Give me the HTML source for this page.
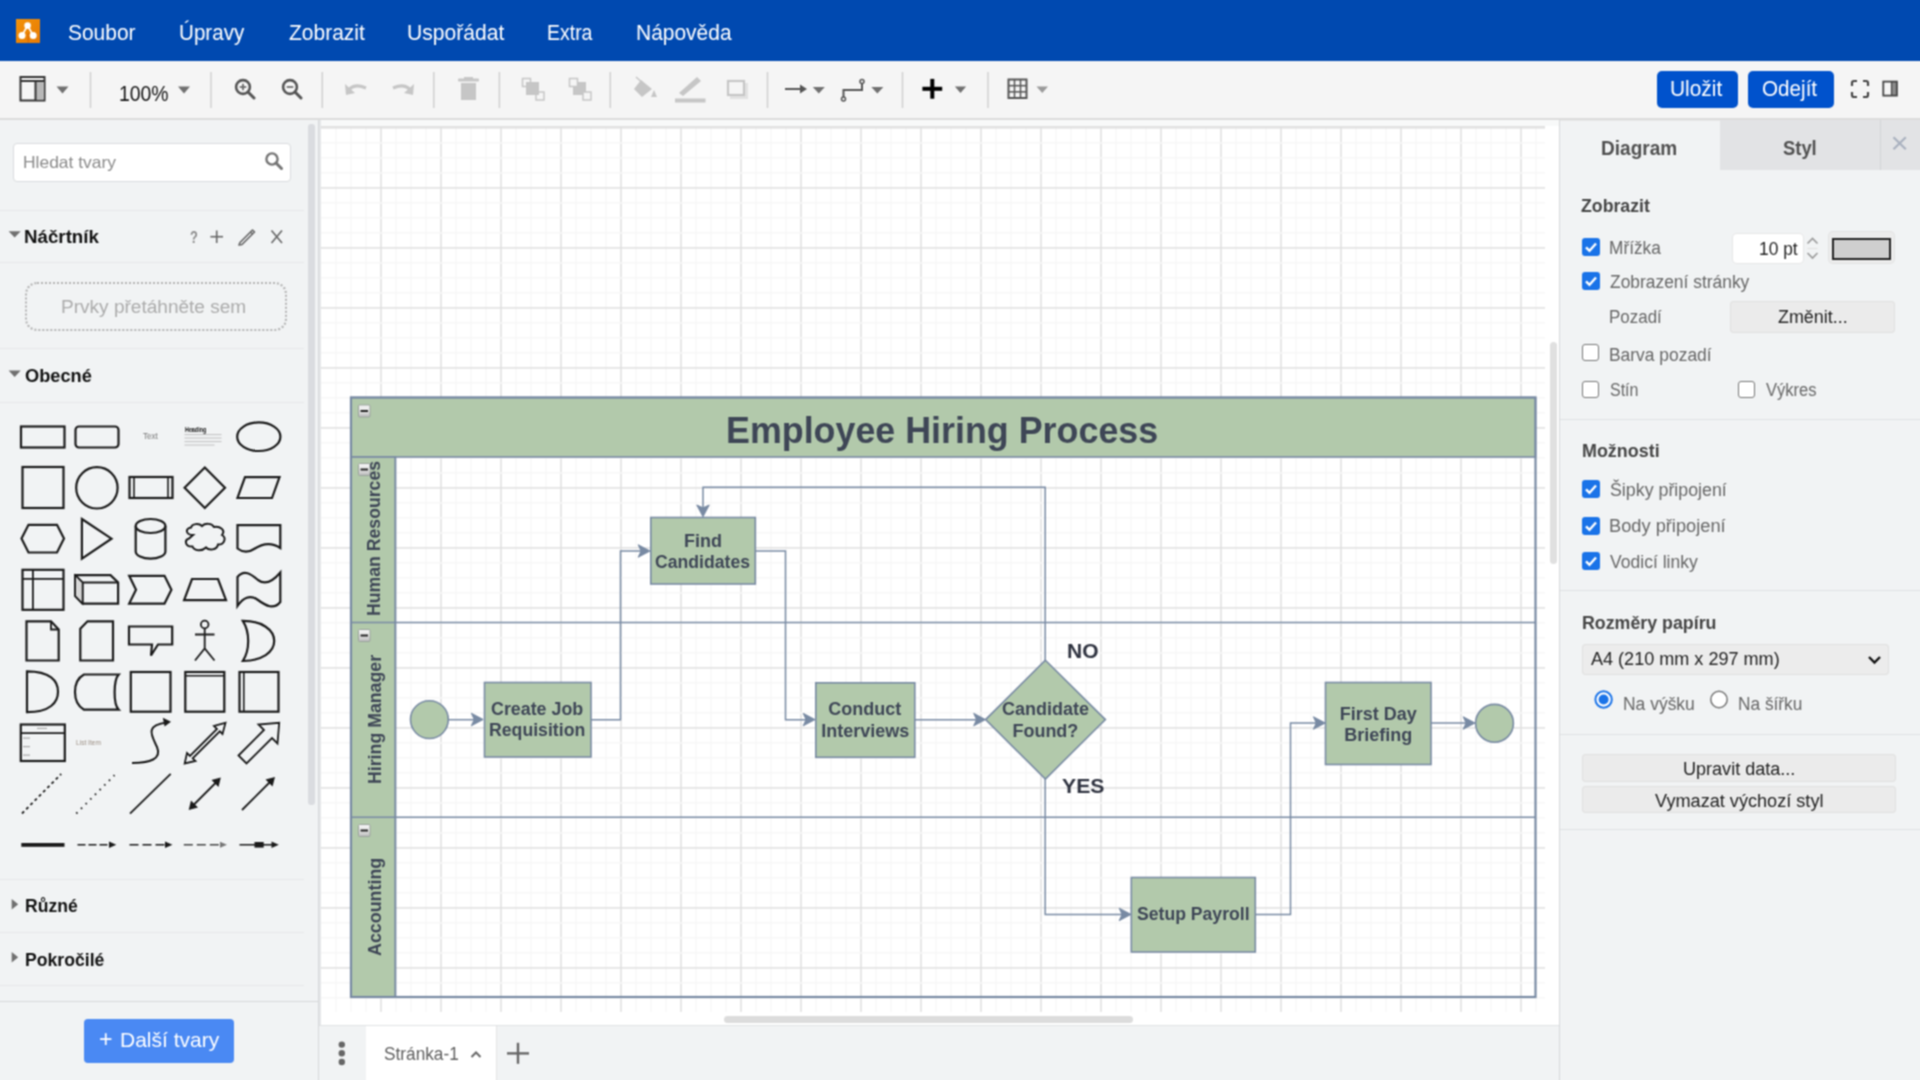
<!DOCTYPE html>
<html><head><meta charset="utf-8"><title>draw.io</title>
<style>
html,body{margin:0;padding:0;width:1920px;height:1080px;overflow:hidden;background:#fff;font-family:"Liberation Sans",sans-serif}
</style></head><body>
<svg width="0" height="0" style="position:absolute;left:0;top:0"><filter id="soft" filterUnits="userSpaceOnUse" x="0" y="0" width="1920" height="1080" color-interpolation-filters="sRGB"><feConvolveMatrix order="3" kernelMatrix="1 2 1 2 4 2 1 2 1" divisor="16" edgeMode="duplicate"/></filter></svg>
<div id="root" style="position:absolute;left:0;top:0;width:1920px;height:1080px;overflow:hidden;filter:url(#soft)">
<div style="position:absolute;left:0;top:0;width:1920px;height:61px;background:#0049b0"></div>
<svg style="position:absolute;left:0;top:0" width="60" height="61">
<defs><linearGradient id="lg" x1="0" y1="0" x2="1" y2="1"><stop offset="0" stop-color="#f39208"/><stop offset="1" stop-color="#e67a05"/></linearGradient></defs>
<rect x="16" y="19" width="24" height="24" fill="url(#lg)"/>
<path d="M27.6 33 L27.6 42.5 L28.8 42.5 L28.8 33 Z" fill="#d86a04"/>
<path d="M27.6 25.5 L22 35.5 M27.6 25.5 L33.2 35.5" stroke="#fff" stroke-width="1.6" fill="none"/>
<circle cx="27.6" cy="25.6" r="3.3" fill="#fff"/>
<circle cx="22" cy="35.6" r="3.5" fill="#fff"/>
<circle cx="33.2" cy="35.6" r="3.5" fill="#fff"/>
</svg>
<div style="position:absolute;left:0;top:61px;width:1920px;height:58px;background:#f5f5f5"></div>
<div style="position:absolute;left:0;top:118px;width:1920px;height:1.5px;background:#dcdcdc"></div>
<svg style="position:absolute;left:0;top:0" width="1920" height="120"><rect x="20.5" y="77" width="24" height="23.5" fill="none" stroke="#333" stroke-width="2"/><line x1="20.5" y1="81" x2="44.5" y2="81" stroke="#333" stroke-width="2"/><rect x="36" y="82" width="8" height="17.5" fill="#b8b8b8"/><line x1="35.5" y1="81" x2="35.5" y2="100.5" stroke="#333" stroke-width="2"/><path d="M56.5 86.5 L68.5 86.5 L62.5 93.5 Z" fill="#707070"/><line x1="90.5" y1="72" x2="90.5" y2="108" stroke="#d0d0d0" stroke-width="1.5"/><line x1="211" y1="72" x2="211" y2="108" stroke="#d0d0d0" stroke-width="1.5"/><line x1="322.3" y1="72" x2="322.3" y2="108" stroke="#d0d0d0" stroke-width="1.5"/><line x1="433.75" y1="72" x2="433.75" y2="108" stroke="#d0d0d0" stroke-width="1.5"/><line x1="499.4" y1="72" x2="499.4" y2="108" stroke="#d0d0d0" stroke-width="1.5"/><line x1="610.3" y1="72" x2="610.3" y2="108" stroke="#d0d0d0" stroke-width="1.5"/><line x1="767.5" y1="72" x2="767.5" y2="108" stroke="#d0d0d0" stroke-width="1.5"/><line x1="902.5" y1="72" x2="902.5" y2="108" stroke="#d0d0d0" stroke-width="1.5"/><line x1="988" y1="72" x2="988" y2="108" stroke="#d0d0d0" stroke-width="1.5"/><path d="M178 86.5 L190 86.5 L184.0 93.5 Z" fill="#707070"/><circle cx="243" cy="87" r="6.9" fill="none" stroke="#555" stroke-width="2.6"/><line x1="248" y1="92" x2="254" y2="98" stroke="#555" stroke-width="3" stroke-linecap="round"/><line x1="239.7" y1="87" x2="246.3" y2="87" stroke="#666" stroke-width="1.7"/><line x1="243" y1="83.7" x2="243" y2="90.3" stroke="#666" stroke-width="1.7"/><circle cx="290" cy="87" r="6.9" fill="none" stroke="#555" stroke-width="2.6"/><line x1="295" y1="92" x2="301" y2="98" stroke="#555" stroke-width="3" stroke-linecap="round"/><line x1="286.7" y1="87" x2="293.3" y2="87" stroke="#666" stroke-width="1.7"/><path d="M347 93 Q352 82 366 88" fill="none" stroke="#c6c6c6" stroke-width="3"/><path d="M345 84 L346 95 L355 93 Z" fill="#c6c6c6"/><path d="M412 93 Q407 82 393 88" fill="none" stroke="#c6c6c6" stroke-width="3"/><path d="M414 84 L413 95 L404 93 Z" fill="#c6c6c6"/><rect x="458" y="78.5" width="21" height="3" rx="1" fill="#c6c6c6"/><rect x="464" y="77" width="9" height="2" fill="#c6c6c6"/><rect x="461" y="83" width="15" height="17" fill="#c6c6c6"/><rect x="522.5" y="78.5" width="8" height="8" fill="none" stroke="#c6c6c6" stroke-width="1.5"/><rect x="536" y="92" width="8" height="8" fill="none" stroke="#c6c6c6" stroke-width="1.5"/><rect x="526" y="82" width="13" height="13" fill="#c6c6c6"/><rect x="573" y="82" width="13" height="13" fill="#c6c6c6"/><rect x="569.5" y="78.5" width="8" height="8" fill="#f5f5f5" stroke="#c6c6c6" stroke-width="1.5"/><rect x="583" y="92" width="8" height="8" fill="#f5f5f5" stroke="#c6c6c6" stroke-width="1.5"/><path d="M641 80 L652 89 L642 97 L634 89 Z" fill="#c6c6c6"/><line x1="636" y1="77" x2="645" y2="85" stroke="#c6c6c6" stroke-width="1.5"/><path d="M654 90 L657 97 L651 97 Z" fill="#c6c6c6"/><path d="M679 93 L697 77 L701 81 L683 96 Z" fill="#c6c6c6"/><rect x="675" y="98.5" width="30.5" height="4" fill="#c6c6c6"/><rect x="730" y="83" width="18" height="16" fill="#e2e2e2"/><rect x="728" y="81" width="16" height="14" fill="#f5f5f5" stroke="#c6c6c6" stroke-width="2.2"/><line x1="785" y1="89" x2="803" y2="89" stroke="#555" stroke-width="2"/><path d="M807 89 L800 84.5 L800 93.5 Z" fill="#555"/><path d="M812.8 87 L824.8 87 L818.8 93.5 Z" fill="#707070"/><path d="M843.5 99 L843.5 90 L862 90 L862 81.5" fill="none" stroke="#555" stroke-width="2"/><circle cx="843.5" cy="99" r="2" fill="#f5f5f5" stroke="#555" stroke-width="1.5"/><circle cx="862" cy="81.5" r="2" fill="#f5f5f5" stroke="#555" stroke-width="1.5"/><path d="M871.3 87 L883.4 87 L877.3499999999999 93.5 Z" fill="#707070"/><rect x="922.4" y="86.8" width="19.8" height="4" fill="#000"/><rect x="930.3" y="78.9" width="4" height="19.8" fill="#000"/><path d="M954.9 86.5 L966.1 86.5 L960.5 93 Z" fill="#707070"/><rect x="1008.5" y="79.5" width="18" height="18.5" fill="none" stroke="#555" stroke-width="2"/><line x1="1014.5" y1="79.5" x2="1014.5" y2="98" stroke="#555" stroke-width="1.5"/><line x1="1008.5" y1="85.67" x2="1026.5" y2="85.67" stroke="#555" stroke-width="1.5"/><line x1="1020.5" y1="79.5" x2="1020.5" y2="98" stroke="#555" stroke-width="1.5"/><line x1="1008.5" y1="91.84" x2="1026.5" y2="91.84" stroke="#555" stroke-width="1.5"/><path d="M1036.5 86.5 L1048 86.5 L1042.25 93 Z" fill="#9a9a9a"/><path d="M1852 86 L1852 83 Q1852 81 1854 81 L1857 81 M1863 81 L1866 81 Q1868 81 1868 83 L1868 86 M1868 92 L1868 95 Q1868 97 1866 97 L1863 97 M1857 97 L1854 97 Q1852 97 1852 95 L1852 92" fill="none" stroke="#444" stroke-width="2.2"/><rect x="1891.5" y="82" width="5" height="13.5" fill="#8a8a8a"/><rect x="1883.3" y="81.6" width="13.6" height="14" fill="none" stroke="#444" stroke-width="1.8"/><line x1="1891.5" y1="81.6" x2="1891.5" y2="95.6" stroke="#444" stroke-width="1.2"/></svg>
<div style="position:absolute;left:1656.5px;top:71px;width:81px;height:36.5px;background:#0052cc;border-radius:5px"></div>
<div style="position:absolute;left:1747.5px;top:71px;width:86px;height:36.5px;background:#0052cc;border-radius:5px"></div>
<div style="position:absolute;left:0;top:119.5px;width:318px;height:961px;background:#f1f3f4"></div>
<div style="position:absolute;left:317.5px;top:119.5px;width:1.5px;height:961px;background:#d6d8da"></div>
<div style="position:absolute;left:307.5px;top:124px;width:7px;height:681px;background:#dadce0;border-radius:3px"></div>
<div style="position:absolute;left:13px;top:142.5px;width:276px;height:37.5px;background:#fff;border:1px solid #d9dbde;border-radius:4px"></div>
<svg style="position:absolute;left:260px;top:148px" width="30" height="26"><circle cx="12" cy="11" r="5.6" fill="none" stroke="#757575" stroke-width="2.4"/><line x1="16" y1="15" x2="21.5" y2="20.5" stroke="#757575" stroke-width="3" stroke-linecap="round"/></svg>
<div style="position:absolute;left:0;top:209.5px;width:304px;height:1px;background:#e6e7e9"></div>
<div style="position:absolute;left:0;top:261.5px;width:304px;height:1px;background:#e6e7e9"></div>
<div style="position:absolute;left:0;top:347.5px;width:304px;height:1px;background:#e6e7e9"></div>
<div style="position:absolute;left:0;top:402.3px;width:304px;height:1px;background:#e6e7e9"></div>
<div style="position:absolute;left:0;top:879.0px;width:304px;height:1px;background:#e6e7e9"></div>
<div style="position:absolute;left:0;top:931.5px;width:304px;height:1px;background:#e6e7e9"></div>
<div style="position:absolute;left:0;top:984.5px;width:304px;height:1px;background:#e6e7e9"></div>
<div style="position:absolute;left:0;top:1000.5px;width:318px;height:1.5px;background:#d6d8da"></div>
<svg style="position:absolute;left:0;top:0" width="30" height="1000">
<path d="M8.6 231.2 L20.7 231.2 L14.65 237.6 Z" fill="#707070"/>
<path d="M8.6 370.5 L20.7 370.5 L14.65 376.9 Z" fill="#707070"/>
<path d="M11.7 899 L18.2 904.3 L11.7 909.6 Z" fill="#707070"/>
<path d="M11.7 952 L18.2 957.3 L11.7 962.6 Z" fill="#707070"/>
</svg>
<svg style="position:absolute;left:180px;top:220px" width="120" height="35">
<line x1="36.7" y1="10.5" x2="36.7" y2="23" stroke="#666" stroke-width="1.6"/><line x1="30.4" y1="16.7" x2="43" y2="16.7" stroke="#666" stroke-width="1.6"/>
<path d="M60 22.5 L72.5 10 L74.5 12 L62 24.5 L59 25 Z" fill="none" stroke="#666" stroke-width="1.6" stroke-linejoin="round"/><line x1="70.5" y1="12" x2="72.5" y2="14" stroke="#666" stroke-width="1.4"/>
<path d="M91.5 10.5 L102 23 M102 10.5 L91.5 23" stroke="#666" stroke-width="1.6"/>
</svg>
<div style="position:absolute;left:24.5px;top:281.5px;width:258px;height:45.5px;border:2px dotted #b4b4b4;border-radius:12px"></div>
<div style="position:absolute;left:84px;top:1019px;width:150px;height:43.5px;background:#4a89f3;border-radius:4px"></div>
<svg style="position:absolute;left:0;top:0" width="320" height="880"><rect x="21" y="426.5" width="43.5" height="21" fill="none" stroke="#1a1a1a" stroke-width="2.2"/><rect x="75.5" y="426.5" width="43" height="21" rx="3.5" fill="none" stroke="#1a1a1a" stroke-width="2.2"/><ellipse cx="258.8" cy="436.7" rx="21.6" ry="14.3" fill="none" stroke="#1a1a1a" stroke-width="2.2"/><rect x="184.5" y="434" width="37" height="1.1" fill="#c4c4c4"/><rect x="184.5" y="437.5" width="37" height="1.1" fill="#c4c4c4"/><rect x="184.5" y="441" width="37" height="1.1" fill="#c4c4c4"/><rect x="184.5" y="444.5" width="30" height="1.1" fill="#c4c4c4"/><rect x="22.5" y="467" width="41" height="41" fill="none" stroke="#1a1a1a" stroke-width="2.2"/><circle cx="96.9" cy="487.8" r="20.7" fill="none" stroke="#1a1a1a" stroke-width="2.2"/><rect x="129.5" y="477" width="43" height="21" fill="none" stroke="#1a1a1a" stroke-width="2.2"/><line x1="134" y1="477" x2="134" y2="498" stroke="#1a1a1a" stroke-width="1.6"/><line x1="168" y1="477" x2="168" y2="498" stroke="#1a1a1a" stroke-width="1.6"/><path d="M204.8 467.5 L225 487.8 L204.8 508 L184.6 487.8 Z" fill="none" stroke="#1a1a1a" stroke-width="2.2" stroke-linejoin="miter" /><path d="M245 477.2 L279.5 477.2 L272 498 L237.5 498 Z" fill="none" stroke="#1a1a1a" stroke-width="2.2" stroke-linejoin="miter" /><path d="M28.5 524.8 L57 524.8 L64 538.6 L57 552.5 L28.5 552.5 L21.5 538.6 Z" fill="none" stroke="#1a1a1a" stroke-width="2.2" stroke-linejoin="miter" /><path d="M81.9 519 L111.5 538.7 L81.9 558.6 Z" fill="none" stroke="#1a1a1a" stroke-width="2.2" stroke-linejoin="miter" /><path d="M135.7 526 L135.7 551.5 A14.8 7.2 0 0 0 165.4 551.5 L165.4 526" fill="none" stroke="#1a1a1a" stroke-width="2.2" stroke-linejoin="miter" /><ellipse cx="150.55" cy="526" rx="14.85" ry="7" fill="none" stroke="#1a1a1a" stroke-width="2.2"/><path d="M193 535 C186 535 184.5 528.5 191 527.5 C192 523.5 199 523 202 526 C205 523 212 523 214 527 C220 526 226 530 222 535 C227 538 224 545 218 544.5 C217 550 209 551 206 547.5 C202 551.5 194 551 192.5 546.5 C185 547 184 540 189 538.5 Z" fill="none" stroke="#1a1a1a" stroke-width="2" stroke-linejoin="miter" /><path d="M237.5 525.2 L280.3 525.2 L280.3 548 C270 541 260 545 254 549 C248 553 242 552 237.5 548.5 Z" fill="none" stroke="#1a1a1a" stroke-width="2.2" stroke-linejoin="miter" /><rect x="22.5" y="569.8" width="41" height="40" fill="none" stroke="#1a1a1a" stroke-width="2.2"/><line x1="32.9" y1="569.8" x2="32.9" y2="609.8" stroke="#1a1a1a" stroke-width="1.8"/><line x1="22.5" y1="578.9" x2="63.5" y2="578.9" stroke="#1a1a1a" stroke-width="1.8"/><path d="M75.2 575.2 L110.5 575.2 L118.1 582.5 L118.1 603.6 L82.5 603.6 L75.2 596 Z" fill="none" stroke="#1a1a1a" stroke-width="2.2" stroke-linejoin="miter" /><path d="M75.2 575.2 L82.5 582.5 L118.1 582.5 M82.5 582.5 L82.5 603.6" fill="none" stroke="#1a1a1a" stroke-width="2.2" stroke-linejoin="miter" /><path d="M75.2 575.2 L82.5 582.5 L82.5 603.6 L75.2 596 Z" fill="#d8d8d8"/><path d="M75.2 575.2 L82.5 582.5 L82.5 603.6 L75.2 596 Z" fill="none" stroke="#1a1a1a" stroke-width="1.5" stroke-linejoin="miter" /><path d="M129.2 575.8 L164.5 575.8 L171.4 589.7 L164.5 603.6 L129.2 603.6 L136 589.7 Z" fill="none" stroke="#1a1a1a" stroke-width="2.2" stroke-linejoin="miter" /><path d="M192 579 L218 579 L226 600.2 L184.1 600.2 Z" fill="none" stroke="#1a1a1a" stroke-width="2.2" stroke-linejoin="miter" /><path d="M237.5 577 C244 569 251 574 258 580 C266 586 274 580 280.3 572.5 L280.3 602 C274 610 266 606 258 600 C250 594 243 598 237.5 606 Z" fill="none" stroke="#1a1a1a" stroke-width="2.2" stroke-linejoin="miter" /><path d="M26.5 621.3 L51 621.3 L58.7 629.5 L58.7 660.5 L26.5 660.5 Z" fill="none" stroke="#1a1a1a" stroke-width="2.2" stroke-linejoin="miter" /><path d="M51 621.3 L51 629.5 L58.7 629.5" fill="none" stroke="#1a1a1a" stroke-width="1.8" stroke-linejoin="miter" /><path d="M87.5 621.3 L113 621.3 L113 660.5 L80.3 660.5 L80.3 628.8 Z" fill="none" stroke="#1a1a1a" stroke-width="2.2" stroke-linejoin="miter" /><path d="M129 626.5 L172.2 626.5 L172.2 644.5 L158 644.5 L151 655.5 L152 644.5 L129 644.5 Z" fill="none" stroke="#1a1a1a" stroke-width="2.2" stroke-linejoin="miter" /><circle cx="204.7" cy="624.5" r="3.8" fill="none" stroke="#1a1a1a" stroke-width="1.8"/><path d="M204.7 628.3 L204.7 648.5 M195 634.5 L214.5 634.5 M195 660.5 L204.7 648.5 L214.5 660.5" fill="none" stroke="#1a1a1a" stroke-width="1.8" stroke-linejoin="miter" /><path d="M242.8 620.8 C262 620.8 274.2 630 274.2 641 C274.2 652 262 661 242.8 661 C250 650 250 632 242.8 620.8 Z" fill="none" stroke="#1a1a1a" stroke-width="2.2" stroke-linejoin="miter" /><path d="M27 671.3 C50 671.3 58 681 58 691.7 C58 702.5 50 712.2 27 712.2 Z" fill="none" stroke="#1a1a1a" stroke-width="2.2" stroke-linejoin="miter" /><path d="M84 674.5 L118.7 674.5 C113.5 680 113 704 118.7 709.7 L84 709.7 C72 703 72 681 84 674.5 Z" fill="none" stroke="#1a1a1a" stroke-width="2.2" stroke-linejoin="miter" /><rect x="130.8" y="672" width="39.7" height="39.7" fill="none" stroke="#1a1a1a" stroke-width="2.2"/><rect x="185.3" y="672" width="39" height="39.7" fill="none" stroke="#1a1a1a" stroke-width="2.2"/><line x1="185.3" y1="675.8" x2="224.3" y2="675.8" stroke="#1a1a1a" stroke-width="1.6"/><rect x="239.5" y="672" width="39" height="39.7" fill="none" stroke="#1a1a1a" stroke-width="2.2"/><line x1="243.8" y1="672" x2="243.8" y2="711.7" stroke="#1a1a1a" stroke-width="1.6"/><rect x="20.8" y="724.5" width="44" height="36.5" fill="none" stroke="#1a1a1a" stroke-width="2.2"/><line x1="20.8" y1="733.2" x2="64.8" y2="733.2" stroke="#1a1a1a" stroke-width="1.8"/><rect x="23" y="737.5" width="7" height="1.2" fill="#aaa"/><rect x="23" y="746" width="7" height="1.2" fill="#aaa"/><rect x="23" y="754.5" width="7" height="1.2" fill="#aaa"/><rect x="37" y="727.8" width="10" height="1.2" fill="#aaa"/><path d="M132 763 C150 763 162 759 157 747 C152 736 144 725 167 722.5" fill="none" stroke="#1a1a1a" stroke-width="2" stroke-linejoin="miter" /><path d="M171 721.8 L162.8 717.8 L164.6 726.5 Z" fill="#1a1a1a"/><path d="M184.7 763.5 L187 753 L190 756 L217 729 L214 726 L225.5 722.8 L222.5 734 L219.8 731.3 L192.7 758.3 L195.5 761 Z" fill="none" stroke="#1a1a1a" stroke-width="1.8" stroke-linejoin="miter" /><path d="M238.5 755.5 L264 730 L258.5 724.5 L279.2 722.8 L277.5 743.5 L272 738 L246.5 763.5 Z" fill="none" stroke="#1a1a1a" stroke-width="1.8" stroke-linejoin="miter" /><line x1="22" y1="813.5" x2="61.2" y2="774" stroke="#1a1a1a" stroke-width="1.8" stroke-dasharray="3 3"/><line x1="76.3" y1="813.5" x2="114.5" y2="775.2" stroke="#1a1a1a" stroke-width="1.8" stroke-dasharray="1.6 5"/><line x1="130" y1="813.7" x2="170.7" y2="773.8" stroke="#1a1a1a" stroke-width="1.8"/><line x1="192" y1="806.5" x2="217.5" y2="781" stroke="#1a1a1a" stroke-width="1.8"/><path d="M188.7 810 L191 800.5 L198 807.5 Z M220.8 777.5 L218.5 787 L211.5 780 Z" fill="#1a1a1a"/><line x1="242" y1="810" x2="272" y2="780" stroke="#1a1a1a" stroke-width="1.8"/><path d="M275 777 L272.5 786.5 L265.5 779.5 Z" fill="#1a1a1a"/><rect x="21.3" y="843" width="43.2" height="3.8" fill="#1a1a1a"/><line x1="77.5" y1="844.8" x2="110" y2="844.8" stroke="#1a1a1a" stroke-width="1.6" stroke-dasharray="8 3"/><path d="M116.3 844.8 L109 841.5 L109 848 Z" fill="#1a1a1a"/><line x1="129.5" y1="844.8" x2="166" y2="844.8" stroke="#1a1a1a" stroke-width="1.6" stroke-dasharray="9 4"/><path d="M172.5 844.8 L165 841.5 L165 848 Z" fill="#1a1a1a"/><line x1="183.8" y1="844.8" x2="221" y2="844.8" stroke="#1a1a1a" stroke-width="1.4" stroke-dasharray="9 4" opacity="0.8"/><path d="M227 844.8 L220 841.8 L220 847.8 Z" fill="#777"/><line x1="239.5" y1="844.8" x2="272" y2="844.8" stroke="#1a1a1a" stroke-width="1.6"/><rect x="254.5" y="842" width="9.2" height="5.6" fill="#1a1a1a"/><path d="M278.8 844.8 L271.5 841.5 L271.5 848 Z" fill="#1a1a1a"/></svg>
<div style="position:absolute;left:319px;top:119.5px;width:1240px;height:906px;background:#fff"></div>
<div style="position:absolute;left:319px;top:119.5px;width:1240px;height:6.5px;background:#f8f9f9"></div>
<div style="position:absolute;left:319px;top:125.5px;width:1226px;height:1.5px;background:#e0e0e0"></div>
<div style="position:absolute;left:319px;top:119.5px;width:1.5px;height:906px;background:#e4e6e8"></div>
<svg style="position:absolute;left:0;top:0" width="1920" height="1080"><defs><linearGradient id="cbg" x1="0" y1="0" x2="0" y2="1"><stop offset="0" stop-color="#f4f4f4"/><stop offset="0.5" stop-color="#e6e6e6"/><stop offset="1" stop-color="#b8b8b8"/></linearGradient></defs><rect x="335.25" y="127" width="1.5" height="885" fill="#f7f7f7"/><rect x="350.25" y="127" width="1.5" height="885" fill="#f7f7f7"/><rect x="365.25" y="127" width="1.5" height="885" fill="#f7f7f7"/><rect x="380.25" y="127" width="1.5" height="885" fill="#e0e0e0"/><rect x="395.25" y="127" width="1.5" height="885" fill="#f7f7f7"/><rect x="410.25" y="127" width="1.5" height="885" fill="#f7f7f7"/><rect x="425.25" y="127" width="1.5" height="885" fill="#f7f7f7"/><rect x="440.25" y="127" width="1.5" height="885" fill="#e0e0e0"/><rect x="455.25" y="127" width="1.5" height="885" fill="#f7f7f7"/><rect x="470.25" y="127" width="1.5" height="885" fill="#f7f7f7"/><rect x="485.25" y="127" width="1.5" height="885" fill="#f7f7f7"/><rect x="500.25" y="127" width="1.5" height="885" fill="#e0e0e0"/><rect x="515.25" y="127" width="1.5" height="885" fill="#f7f7f7"/><rect x="530.25" y="127" width="1.5" height="885" fill="#f7f7f7"/><rect x="545.25" y="127" width="1.5" height="885" fill="#f7f7f7"/><rect x="560.25" y="127" width="1.5" height="885" fill="#e0e0e0"/><rect x="575.25" y="127" width="1.5" height="885" fill="#f7f7f7"/><rect x="590.25" y="127" width="1.5" height="885" fill="#f7f7f7"/><rect x="605.25" y="127" width="1.5" height="885" fill="#f7f7f7"/><rect x="620.25" y="127" width="1.5" height="885" fill="#e0e0e0"/><rect x="635.25" y="127" width="1.5" height="885" fill="#f7f7f7"/><rect x="650.25" y="127" width="1.5" height="885" fill="#f7f7f7"/><rect x="665.25" y="127" width="1.5" height="885" fill="#f7f7f7"/><rect x="680.25" y="127" width="1.5" height="885" fill="#e0e0e0"/><rect x="695.25" y="127" width="1.5" height="885" fill="#f7f7f7"/><rect x="710.25" y="127" width="1.5" height="885" fill="#f7f7f7"/><rect x="725.25" y="127" width="1.5" height="885" fill="#f7f7f7"/><rect x="740.25" y="127" width="1.5" height="885" fill="#e0e0e0"/><rect x="755.25" y="127" width="1.5" height="885" fill="#f7f7f7"/><rect x="770.25" y="127" width="1.5" height="885" fill="#f7f7f7"/><rect x="785.25" y="127" width="1.5" height="885" fill="#f7f7f7"/><rect x="800.25" y="127" width="1.5" height="885" fill="#e0e0e0"/><rect x="815.25" y="127" width="1.5" height="885" fill="#f7f7f7"/><rect x="830.25" y="127" width="1.5" height="885" fill="#f7f7f7"/><rect x="845.25" y="127" width="1.5" height="885" fill="#f7f7f7"/><rect x="860.25" y="127" width="1.5" height="885" fill="#e0e0e0"/><rect x="875.25" y="127" width="1.5" height="885" fill="#f7f7f7"/><rect x="890.25" y="127" width="1.5" height="885" fill="#f7f7f7"/><rect x="905.25" y="127" width="1.5" height="885" fill="#f7f7f7"/><rect x="920.25" y="127" width="1.5" height="885" fill="#e0e0e0"/><rect x="935.25" y="127" width="1.5" height="885" fill="#f7f7f7"/><rect x="950.25" y="127" width="1.5" height="885" fill="#f7f7f7"/><rect x="965.25" y="127" width="1.5" height="885" fill="#f7f7f7"/><rect x="980.25" y="127" width="1.5" height="885" fill="#e0e0e0"/><rect x="995.25" y="127" width="1.5" height="885" fill="#f7f7f7"/><rect x="1010.25" y="127" width="1.5" height="885" fill="#f7f7f7"/><rect x="1025.25" y="127" width="1.5" height="885" fill="#f7f7f7"/><rect x="1040.25" y="127" width="1.5" height="885" fill="#e0e0e0"/><rect x="1055.25" y="127" width="1.5" height="885" fill="#f7f7f7"/><rect x="1070.25" y="127" width="1.5" height="885" fill="#f7f7f7"/><rect x="1085.25" y="127" width="1.5" height="885" fill="#f7f7f7"/><rect x="1100.25" y="127" width="1.5" height="885" fill="#e0e0e0"/><rect x="1115.25" y="127" width="1.5" height="885" fill="#f7f7f7"/><rect x="1130.25" y="127" width="1.5" height="885" fill="#f7f7f7"/><rect x="1145.25" y="127" width="1.5" height="885" fill="#f7f7f7"/><rect x="1160.25" y="127" width="1.5" height="885" fill="#e0e0e0"/><rect x="1175.25" y="127" width="1.5" height="885" fill="#f7f7f7"/><rect x="1190.25" y="127" width="1.5" height="885" fill="#f7f7f7"/><rect x="1205.25" y="127" width="1.5" height="885" fill="#f7f7f7"/><rect x="1220.25" y="127" width="1.5" height="885" fill="#e0e0e0"/><rect x="1235.25" y="127" width="1.5" height="885" fill="#f7f7f7"/><rect x="1250.25" y="127" width="1.5" height="885" fill="#f7f7f7"/><rect x="1265.25" y="127" width="1.5" height="885" fill="#f7f7f7"/><rect x="1280.25" y="127" width="1.5" height="885" fill="#e0e0e0"/><rect x="1295.25" y="127" width="1.5" height="885" fill="#f7f7f7"/><rect x="1310.25" y="127" width="1.5" height="885" fill="#f7f7f7"/><rect x="1325.25" y="127" width="1.5" height="885" fill="#f7f7f7"/><rect x="1340.25" y="127" width="1.5" height="885" fill="#e0e0e0"/><rect x="1355.25" y="127" width="1.5" height="885" fill="#f7f7f7"/><rect x="1370.25" y="127" width="1.5" height="885" fill="#f7f7f7"/><rect x="1385.25" y="127" width="1.5" height="885" fill="#f7f7f7"/><rect x="1400.25" y="127" width="1.5" height="885" fill="#e0e0e0"/><rect x="1415.25" y="127" width="1.5" height="885" fill="#f7f7f7"/><rect x="1430.25" y="127" width="1.5" height="885" fill="#f7f7f7"/><rect x="1445.25" y="127" width="1.5" height="885" fill="#f7f7f7"/><rect x="1460.25" y="127" width="1.5" height="885" fill="#e0e0e0"/><rect x="1475.25" y="127" width="1.5" height="885" fill="#f7f7f7"/><rect x="1490.25" y="127" width="1.5" height="885" fill="#f7f7f7"/><rect x="1505.25" y="127" width="1.5" height="885" fill="#f7f7f7"/><rect x="1520.25" y="127" width="1.5" height="885" fill="#e0e0e0"/><rect x="1535.25" y="127" width="1.5" height="885" fill="#f7f7f7"/><rect x="321" y="127.15" width="1224" height="1.5" fill="#e0e0e0"/><rect x="321" y="142.15" width="1224" height="1.5" fill="#f7f7f7"/><rect x="321" y="157.15" width="1224" height="1.5" fill="#f7f7f7"/><rect x="321" y="172.15" width="1224" height="1.5" fill="#f7f7f7"/><rect x="321" y="187.15" width="1224" height="1.5" fill="#e0e0e0"/><rect x="321" y="202.15" width="1224" height="1.5" fill="#f7f7f7"/><rect x="321" y="217.15" width="1224" height="1.5" fill="#f7f7f7"/><rect x="321" y="232.15" width="1224" height="1.5" fill="#f7f7f7"/><rect x="321" y="247.15" width="1224" height="1.5" fill="#e0e0e0"/><rect x="321" y="262.15" width="1224" height="1.5" fill="#f7f7f7"/><rect x="321" y="277.15" width="1224" height="1.5" fill="#f7f7f7"/><rect x="321" y="292.15" width="1224" height="1.5" fill="#f7f7f7"/><rect x="321" y="307.15" width="1224" height="1.5" fill="#e0e0e0"/><rect x="321" y="322.15" width="1224" height="1.5" fill="#f7f7f7"/><rect x="321" y="337.15" width="1224" height="1.5" fill="#f7f7f7"/><rect x="321" y="352.15" width="1224" height="1.5" fill="#f7f7f7"/><rect x="321" y="367.15" width="1224" height="1.5" fill="#e0e0e0"/><rect x="321" y="382.15" width="1224" height="1.5" fill="#f7f7f7"/><rect x="321" y="397.15" width="1224" height="1.5" fill="#f7f7f7"/><rect x="321" y="412.15" width="1224" height="1.5" fill="#f7f7f7"/><rect x="321" y="427.15" width="1224" height="1.5" fill="#e0e0e0"/><rect x="321" y="442.15" width="1224" height="1.5" fill="#f7f7f7"/><rect x="321" y="457.15" width="1224" height="1.5" fill="#f7f7f7"/><rect x="321" y="472.15" width="1224" height="1.5" fill="#f7f7f7"/><rect x="321" y="487.15" width="1224" height="1.5" fill="#e0e0e0"/><rect x="321" y="502.15" width="1224" height="1.5" fill="#f7f7f7"/><rect x="321" y="517.15" width="1224" height="1.5" fill="#f7f7f7"/><rect x="321" y="532.15" width="1224" height="1.5" fill="#f7f7f7"/><rect x="321" y="547.15" width="1224" height="1.5" fill="#e0e0e0"/><rect x="321" y="562.15" width="1224" height="1.5" fill="#f7f7f7"/><rect x="321" y="577.15" width="1224" height="1.5" fill="#f7f7f7"/><rect x="321" y="592.15" width="1224" height="1.5" fill="#f7f7f7"/><rect x="321" y="607.15" width="1224" height="1.5" fill="#e0e0e0"/><rect x="321" y="622.15" width="1224" height="1.5" fill="#f7f7f7"/><rect x="321" y="637.15" width="1224" height="1.5" fill="#f7f7f7"/><rect x="321" y="652.15" width="1224" height="1.5" fill="#f7f7f7"/><rect x="321" y="667.15" width="1224" height="1.5" fill="#e0e0e0"/><rect x="321" y="682.15" width="1224" height="1.5" fill="#f7f7f7"/><rect x="321" y="697.15" width="1224" height="1.5" fill="#f7f7f7"/><rect x="321" y="712.15" width="1224" height="1.5" fill="#f7f7f7"/><rect x="321" y="727.15" width="1224" height="1.5" fill="#e0e0e0"/><rect x="321" y="742.15" width="1224" height="1.5" fill="#f7f7f7"/><rect x="321" y="757.15" width="1224" height="1.5" fill="#f7f7f7"/><rect x="321" y="772.15" width="1224" height="1.5" fill="#f7f7f7"/><rect x="321" y="787.15" width="1224" height="1.5" fill="#e0e0e0"/><rect x="321" y="802.15" width="1224" height="1.5" fill="#f7f7f7"/><rect x="321" y="817.15" width="1224" height="1.5" fill="#f7f7f7"/><rect x="321" y="832.15" width="1224" height="1.5" fill="#f7f7f7"/><rect x="321" y="847.15" width="1224" height="1.5" fill="#e0e0e0"/><rect x="321" y="862.15" width="1224" height="1.5" fill="#f7f7f7"/><rect x="321" y="877.15" width="1224" height="1.5" fill="#f7f7f7"/><rect x="321" y="892.15" width="1224" height="1.5" fill="#f7f7f7"/><rect x="321" y="907.15" width="1224" height="1.5" fill="#e0e0e0"/><rect x="321" y="922.15" width="1224" height="1.5" fill="#f7f7f7"/><rect x="321" y="937.15" width="1224" height="1.5" fill="#f7f7f7"/><rect x="321" y="952.15" width="1224" height="1.5" fill="#f7f7f7"/><rect x="321" y="967.15" width="1224" height="1.5" fill="#e0e0e0"/><rect x="321" y="982.15" width="1224" height="1.5" fill="#f7f7f7"/><rect x="321" y="997.15" width="1224" height="1.5" fill="#f7f7f7"/><rect x="351" y="397.5" width="1184.5" height="59.5" fill="#b2c9ab" stroke="#788aa3" stroke-width="1.6"/><rect x="351" y="457" width="44.4" height="540" fill="#b2c9ab" stroke="#788aa3" stroke-width="1.6"/><line x1="351" y1="622.5" x2="1535.5" y2="622.5" stroke="#788aa3" stroke-width="1.6"/><line x1="351" y1="817.2" x2="1535.5" y2="817.2" stroke="#788aa3" stroke-width="1.6"/><line x1="395.4" y1="457" x2="395.4" y2="997" stroke="#788aa3" stroke-width="1.5"/><rect x="351" y="397.5" width="1184.5" height="599.5" fill="none" stroke="#788aa3" stroke-width="2.2"/><rect x="358.5" y="405" width="11.5" height="12" rx="1" fill="url(#cbg)" stroke="#9aa29c" stroke-width="1"/><rect x="360.5" y="410" width="7.5" height="2" fill="#222"/><rect x="358.5" y="463.5" width="11.5" height="12" rx="1" fill="url(#cbg)" stroke="#9aa29c" stroke-width="1"/><rect x="360.5" y="468.5" width="7.5" height="2" fill="#222"/><rect x="358.5" y="629.5" width="11.5" height="12" rx="1" fill="url(#cbg)" stroke="#9aa29c" stroke-width="1"/><rect x="360.5" y="634.5" width="7.5" height="2" fill="#222"/><rect x="358.5" y="824.5" width="11.5" height="12" rx="1" fill="url(#cbg)" stroke="#9aa29c" stroke-width="1"/><rect x="360.5" y="829.5" width="7.5" height="2" fill="#222"/><circle cx="429.4" cy="719.6" r="18.9" fill="#b2c9ab" stroke="#788aa3" stroke-width="1.6"/><circle cx="1494.5" cy="723.3" r="18.9" fill="#b2c9ab" stroke="#788aa3" stroke-width="1.6"/><rect x="484.5" y="682.5" width="106.5" height="74.5" fill="#b2c9ab" stroke="#788aa3" stroke-width="1.6"/><rect x="650.8" y="517.5" width="104.5" height="66.5" fill="#b2c9ab" stroke="#788aa3" stroke-width="1.6"/><rect x="815.8" y="682.8" width="99" height="74.5" fill="#b2c9ab" stroke="#788aa3" stroke-width="1.6"/><rect x="1325.5" y="682.5" width="105.5" height="82" fill="#b2c9ab" stroke="#788aa3" stroke-width="1.6"/><rect x="1131.3" y="877.5" width="124" height="74.5" fill="#b2c9ab" stroke="#788aa3" stroke-width="1.6"/><path d="M1045.4 660.2 L1105.4 719.6 L1045.4 779 L985.6 719.6 Z" fill="#b2c9ab" stroke="#788aa3" stroke-width="1.6"/><polyline points="449,719.7 474,719.7" fill="none" stroke="#788aa3" stroke-width="1.5"/><path d="M483.2,719.5 L471.4,713.25 L474.2,719.5 L471.4,725.75 Z" fill="#788aa3" stroke="#788aa3" stroke-width="1"/><polyline points="591,719.7 620.5,719.7 620.5,551 641,551" fill="none" stroke="#788aa3" stroke-width="1.5"/><path d="M650,551 L638.2,544.75 L641.0,551 L638.2,557.25 Z" fill="#788aa3" stroke="#788aa3" stroke-width="1"/><polyline points="755.5,551 785.5,551 785.5,719.7 806,719.7" fill="none" stroke="#788aa3" stroke-width="1.5"/><path d="M815,719.6 L803.2,713.35 L806.0,719.6 L803.2,725.85 Z" fill="#788aa3" stroke="#788aa3" stroke-width="1"/><polyline points="915,719.7 977,719.7" fill="none" stroke="#788aa3" stroke-width="1.5"/><path d="M985.5,719.6 L973.7,713.35 L976.5,719.6 L973.7,725.85 Z" fill="#788aa3" stroke="#788aa3" stroke-width="1"/><polyline points="1045.2,660.5 1045.2,487.3 703,487.3 703,508" fill="none" stroke="#788aa3" stroke-width="1.5"/><path d="M703,516.8 L696.75,504.99999999999994 L703,507.79999999999995 L709.25,504.99999999999994 Z" fill="#788aa3" stroke="#788aa3" stroke-width="1"/><polyline points="1045.2,779 1045.2,914.4 1122,914.4" fill="none" stroke="#788aa3" stroke-width="1.5"/><path d="M1131,914.4 L1119.2,908.15 L1122.0,914.4 L1119.2,920.65 Z" fill="#788aa3" stroke="#788aa3" stroke-width="1"/><polyline points="1255.5,914.4 1290.5,914.4 1290.5,723 1316,723" fill="none" stroke="#788aa3" stroke-width="1.5"/><path d="M1325.2,723 L1313.4,716.75 L1316.2,723 L1313.4,729.25 Z" fill="#788aa3" stroke="#788aa3" stroke-width="1"/><polyline points="1431,723 1466,723" fill="none" stroke="#788aa3" stroke-width="1.5"/><path d="M1475,723 L1463.2,716.75 L1466.0,723 L1463.2,729.25 Z" fill="#788aa3" stroke="#788aa3" stroke-width="1"/></svg>
<div style="position:absolute;left:1549.5px;top:342px;width:7px;height:222px;background:#e0e0e0;border-radius:4px"></div>
<div style="position:absolute;left:723.5px;top:1015.5px;width:409px;height:7px;background:#dcdcdc;border-radius:4px"></div>
<div style="position:absolute;left:319px;top:1025px;width:1240px;height:55px;background:#f1f3f4"></div>
<div style="position:absolute;left:319px;top:1024.5px;width:1240px;height:1.5px;background:#e0e2e4"></div>
<div style="position:absolute;left:366px;top:1026px;width:130px;height:54px;background:#fff"></div>
<div style="position:absolute;left:495.5px;top:1026px;width:1px;height:54px;background:#e4e4e4"></div>
<svg style="position:absolute;left:320px;top:1030px" width="230" height="50">
<circle cx="21.8" cy="14.6" r="3.2" fill="#666"/><circle cx="21.8" cy="23.3" r="3.2" fill="#666"/><circle cx="21.8" cy="32" r="3.2" fill="#666"/>
<path d="M151.5 27 L156 22.5 L160.5 27" fill="none" stroke="#666" stroke-width="2"/>
<rect x="187" y="22.2" width="22" height="2.4" fill="#666"/><rect x="196.8" y="12.8" width="2.4" height="21" fill="#666"/>
</svg>
<div style="position:absolute;left:1559px;top:119.5px;width:361px;height:961px;background:#f1f3f4"></div>
<div style="position:absolute;left:1558.5px;top:119.5px;width:1.5px;height:961px;background:#d6d8da"></div>
<div style="position:absolute;left:1719.5px;top:119.5px;width:200.5px;height:50.5px;background:#e2e3e5"></div>
<div style="position:absolute;left:1879.5px;top:119.5px;width:1px;height:50.5px;background:#d2d4d6"></div>
<div style="position:absolute;left:1560px;top:119.5px;width:159.5px;height:1px;background:#e8e8e8"></div>
<svg style="position:absolute;left:1888px;top:132px" width="24" height="22"><path d="M5.5 5.2 L17.8 17.2 M17.8 5.2 L5.5 17.2" stroke="#a9b1bf" stroke-width="2.2"/></svg>
<div style="position:absolute;left:1560px;top:419.0px;width:360px;height:1.2px;background:#dfe1e3"></div>
<div style="position:absolute;left:1560px;top:589.5px;width:360px;height:1.2px;background:#dfe1e3"></div>
<div style="position:absolute;left:1560px;top:733.8px;width:360px;height:1.2px;background:#dfe1e3"></div>
<div style="position:absolute;left:1560px;top:828.7px;width:360px;height:1.2px;background:#dfe1e3"></div>
<div style="position:absolute;left:1581.5px;top:238px;width:18px;height:18px;background:#1a73e8;border-radius:3px"></div>
<svg style="position:absolute;left:1581.5px;top:238px" width="18" height="18"><path d="M4 9.3 L7.5 12.8 L14 5.5" fill="none" stroke="#fff" stroke-width="2.4"/></svg>
<div style="position:absolute;left:1581.5px;top:272.3px;width:18px;height:18px;background:#1a73e8;border-radius:3px"></div>
<svg style="position:absolute;left:1581.5px;top:272.3px" width="18" height="18"><path d="M4 9.3 L7.5 12.8 L14 5.5" fill="none" stroke="#fff" stroke-width="2.4"/></svg>
<div style="position:absolute;left:1581.5px;top:344px;width:15px;height:15px;background:#fff;border:1.5px solid #767676;border-radius:3px"></div>
<div style="position:absolute;left:1581.5px;top:380.7px;width:15px;height:15px;background:#fff;border:1.5px solid #767676;border-radius:3px"></div>
<div style="position:absolute;left:1737.5px;top:380.7px;width:15px;height:15px;background:#fff;border:1.5px solid #767676;border-radius:3px"></div>
<div style="position:absolute;left:1581.5px;top:480.3px;width:18px;height:18px;background:#1a73e8;border-radius:3px"></div>
<svg style="position:absolute;left:1581.5px;top:480.3px" width="18" height="18"><path d="M4 9.3 L7.5 12.8 L14 5.5" fill="none" stroke="#fff" stroke-width="2.4"/></svg>
<div style="position:absolute;left:1581.5px;top:516.5px;width:18px;height:18px;background:#1a73e8;border-radius:3px"></div>
<svg style="position:absolute;left:1581.5px;top:516.5px" width="18" height="18"><path d="M4 9.3 L7.5 12.8 L14 5.5" fill="none" stroke="#fff" stroke-width="2.4"/></svg>
<div style="position:absolute;left:1581.5px;top:552.2px;width:18px;height:18px;background:#1a73e8;border-radius:3px"></div>
<svg style="position:absolute;left:1581.5px;top:552.2px" width="18" height="18"><path d="M4 9.3 L7.5 12.8 L14 5.5" fill="none" stroke="#fff" stroke-width="2.4"/></svg>
<div style="position:absolute;left:1732.5px;top:233.8px;width:70px;height:29px;background:#fff;border-radius:4px;box-shadow:0 0 0 1px #e6e6e6"></div>
<svg style="position:absolute;left:1804px;top:234px" width="18" height="30"><path d="M3.5 9.5 L8.5 4.5 L13.5 9.5" fill="none" stroke="#9a9a9a" stroke-width="1.6"/><path d="M3.5 19 L8.5 24 L13.5 19" fill="none" stroke="#9a9a9a" stroke-width="1.6"/><line x1="3.5" y1="14.5" x2="13.5" y2="14.5" stroke="#e0e0e0" stroke-width="1"/></svg>
<div style="position:absolute;left:1828.5px;top:232px;width:65.5px;height:30.5px;background:#ececec;border-radius:4px;box-shadow:0 0 0 1px #e2e2e2"></div>
<div style="position:absolute;left:1832px;top:238px;width:54.5px;height:17.5px;background:#cfcfcf;border:2px solid #222"></div>
<div style="position:absolute;left:1730.2px;top:300.5px;width:165.0px;height:32.80000000000001px;background:#ebebeb;border-radius:4px;box-shadow:inset 0 0 0 1px #e0e0e0"></div>
<div style="position:absolute;left:1581.6px;top:643.6px;width:307.7px;height:31.2px;background:#ececec;border-radius:4px;box-shadow:inset 0 0 0 1px #e0e0e0"></div>
<svg style="position:absolute;left:1864px;top:650px" width="22" height="20"><path d="M5 7 L10.5 12.5 L16 7" fill="none" stroke="#111" stroke-width="2.4"/></svg>
<svg style="position:absolute;left:1590px;top:686px" width="150" height="28">
<circle cx="13.6" cy="13.5" r="8.2" fill="#fff" stroke="#1a73e8" stroke-width="2"/><circle cx="13.6" cy="13.5" r="5" fill="#1a73e8"/>
<circle cx="129" cy="13.5" r="8.2" fill="#fff" stroke="#767676" stroke-width="1.5"/>
</svg>
<div style="position:absolute;left:1581.6px;top:753.7px;width:314.3000000000002px;height:28.0px;background:#ebebeb;border-radius:4px;box-shadow:inset 0 0 0 1px #e0e0e0"></div>
<div style="position:absolute;left:1581.6px;top:785.6px;width:314.3000000000002px;height:27.199999999999932px;background:#ebebeb;border-radius:4px;box-shadow:inset 0 0 0 1px #e0e0e0"></div>
<span style="position:absolute;left:68.07px;top:22.00px;font:400 22.5px/1 'Liberation Sans';color:#ffffff;white-space:pre;transform:scaleX(0.9306);transform-origin:0 0;">Soubor</span>
<span style="position:absolute;left:179.08px;top:22.00px;font:400 22.5px/1 'Liberation Sans';color:#ffffff;white-space:pre;transform:scaleX(0.9155);transform-origin:0 0;">Úpravy</span>
<span style="position:absolute;left:288.50px;top:22.00px;font:400 22.5px/1 'Liberation Sans';color:#ffffff;white-space:pre;transform:scaleX(0.9329);transform-origin:0 0;">Zobrazit</span>
<span style="position:absolute;left:406.56px;top:22.00px;font:400 22.5px/1 'Liberation Sans';color:#ffffff;white-space:pre;transform:scaleX(0.9369);transform-origin:0 0;">Uspořádat</span>
<span style="position:absolute;left:547.13px;top:22.00px;font:400 22.5px/1 'Liberation Sans';color:#ffffff;white-space:pre;transform:scaleX(0.8654);transform-origin:0 0;">Extra</span>
<span style="position:absolute;left:635.57px;top:22.00px;font:400 22.5px/1 'Liberation Sans';color:#ffffff;white-space:pre;transform:scaleX(0.9314);transform-origin:0 0;">Nápověda</span>
<span style="position:absolute;left:118.54px;top:83.00px;font:400 22.5px/1 'Liberation Sans';color:#111;white-space:pre;transform:scaleX(0.8614);transform-origin:0 0;">100%</span>
<span style="position:absolute;left:1670.07px;top:78.00px;font:400 22.5px/1 'Liberation Sans';color:#fff;white-space:pre;transform:scaleX(0.9286);transform-origin:0 0;">Uložit</span>
<span style="position:absolute;left:1762.00px;top:78.00px;font:400 22.5px/1 'Liberation Sans';color:#fff;white-space:pre;transform:scaleX(0.9180);transform-origin:0 0;">Odejít</span>
<span style="position:absolute;left:23.00px;top:154.00px;font:400 16.5px/1 'Liberation Sans';color:#8a8a8a;white-space:pre;transform:scaleX(1.0562);transform-origin:0 0;">Hledat tvary</span>
<span style="position:absolute;left:24.40px;top:229.00px;font:700 17.5px/1 'Liberation Sans';color:#111111;white-space:pre;transform:scaleX(1.0700);transform-origin:0 0;">Náčrtník</span>
<span style="position:absolute;left:24.60px;top:368.00px;font:700 17.5px/1 'Liberation Sans';color:#111111;white-space:pre;transform:scaleX(1.0422);transform-origin:0 0;">Obecné</span>
<span style="position:absolute;left:24.80px;top:898.00px;font:700 17.5px/1 'Liberation Sans';color:#111111;white-space:pre;transform:scaleX(1.0038);transform-origin:0 0;">Různé</span>
<span style="position:absolute;left:24.80px;top:952.00px;font:700 17.5px/1 'Liberation Sans';color:#111111;white-space:pre;transform:scaleX(1.0076);transform-origin:0 0;">Pokročilé</span>
<span style="position:absolute;left:190.40px;top:229.00px;font:700 16.5px/1 'Liberation Sans';color:#8c8c8c;white-space:pre;transform:scaleX(0.7800);transform-origin:0 0;">?</span>
<span style="position:absolute;left:61.14px;top:298.00px;font:400 18px/1 'Liberation Sans';color:#ababab;white-space:pre;transform:scaleX(1.0580);transform-origin:0 0;">Prvky přetáhněte sem</span>
<span style="position:absolute;left:98.50px;top:1027.00px;font:400 24px/1 'Liberation Sans';color:#fff;white-space:pre;transform:scaleX(0.9643);transform-origin:0 0;">+</span>
<span style="position:absolute;left:120.00px;top:1029.00px;font:400 21px/1 'Liberation Sans';color:#fff;white-space:pre;">Další tvary</span>
<span style="position:absolute;left:143.00px;top:432.00px;font:400 9px/1 'Liberation Sans';color:#777;white-space:pre;transform:scaleX(0.8941);transform-origin:0 0;">Text</span>
<span style="position:absolute;left:184.50px;top:427.00px;font:700 6.5px/1 'Liberation Sans';color:#111;white-space:pre;transform:scaleX(0.8269);transform-origin:0 0;">Heading</span>
<span style="position:absolute;left:76.30px;top:739.00px;font:400 7px/1 'Liberation Sans';color:#9c8f84;white-space:pre;transform:scaleX(0.9407);transform-origin:0 0;">List Item</span>
<span style="position:absolute;left:726.00px;top:413.00px;font:700 36px/1 'Liberation Sans';color:#3e4656;white-space:pre;transform:scaleX(0.9954);transform-origin:0 0;">Employee Hiring Process</span>
<span style="position:absolute;left:684.00px;top:532.00px;font:700 18px/1 'Liberation Sans';color:#3e4656;white-space:pre;">Find</span>
<span style="position:absolute;left:655.00px;top:553.00px;font:700 18px/1 'Liberation Sans';color:#3e4656;white-space:pre;transform:scaleX(0.9794);transform-origin:0 0;">Candidates</span>
<span style="position:absolute;left:490.60px;top:700.00px;font:700 18px/1 'Liberation Sans';color:#3e4656;white-space:pre;transform:scaleX(0.9909);transform-origin:0 0;">Create Job</span>
<span style="position:absolute;left:488.75px;top:721.00px;font:700 18px/1 'Liberation Sans';color:#3e4656;white-space:pre;transform:scaleX(0.9821);transform-origin:0 0;">Requisition</span>
<span style="position:absolute;left:828.30px;top:700.00px;font:700 18px/1 'Liberation Sans';color:#3e4656;white-space:pre;">Conduct</span>
<span style="position:absolute;left:821.30px;top:722.00px;font:700 18px/1 'Liberation Sans';color:#3e4656;white-space:pre;">Interviews</span>
<span style="position:absolute;left:1001.90px;top:700.00px;font:700 18px/1 'Liberation Sans';color:#3e4656;white-space:pre;">Candidate</span>
<span style="position:absolute;left:1012.40px;top:722.00px;font:700 18px/1 'Liberation Sans';color:#3e4656;white-space:pre;">Found?</span>
<span style="position:absolute;left:1339.70px;top:705.00px;font:700 18px/1 'Liberation Sans';color:#3e4656;white-space:pre;">First Day</span>
<span style="position:absolute;left:1344.20px;top:726.00px;font:700 18px/1 'Liberation Sans';color:#3e4656;white-space:pre;">Briefing</span>
<span style="position:absolute;left:1136.50px;top:905.00px;font:700 18px/1 'Liberation Sans';color:#3e4656;white-space:pre;transform:scaleX(0.9783);transform-origin:0 0;">Setup Payroll</span>
<span style="position:absolute;left:1067.00px;top:640.00px;font:700 21px/1 'Liberation Sans';color:#2f3340;white-space:pre;">NO</span>
<span style="position:absolute;left:1061.60px;top:775.00px;font:700 21px/1 'Liberation Sans';color:#2f3340;white-space:pre;transform:scaleX(1.0095);transform-origin:0 0;">YES</span>
<span style="position:absolute;left:365.20px;top:616.40px;font:700 18px/1 'Liberation Sans';color:#3e4656;white-space:pre;transform-origin:0 0;transform:rotate(-90deg) scaleX(0.9810)">Human Resources</span>
<span style="position:absolute;left:365.60px;top:783.90px;font:700 18px/1 'Liberation Sans';color:#3e4656;white-space:pre;transform-origin:0 0;transform:rotate(-90deg) scaleX(0.9848)">Hiring Manager</span>
<span style="position:absolute;left:365.60px;top:956.00px;font:700 18px/1 'Liberation Sans';color:#3e4656;white-space:pre;transform-origin:0 0;transform:rotate(-90deg) scaleX(0.9919)">Accounting</span>
<span style="position:absolute;left:384.00px;top:1045.00px;font:400 18px/1 'Liberation Sans';color:#5f5f5f;white-space:pre;transform:scaleX(0.9583);transform-origin:0 0;">Stránka-1</span>
<span style="position:absolute;left:1601.40px;top:139.00px;font:700 19.5px/1 'Liberation Sans';color:#505050;white-space:pre;transform:scaleX(0.9769);transform-origin:0 0;">Diagram</span>
<span style="position:absolute;left:1783.20px;top:139.00px;font:700 19.5px/1 'Liberation Sans';color:#505050;white-space:pre;transform:scaleX(0.9429);transform-origin:0 0;">Styl</span>
<span style="position:absolute;left:1581.40px;top:198.00px;font:700 17.5px/1 'Liberation Sans';color:#454545;white-space:pre;transform:scaleX(1.0116);transform-origin:0 0;">Zobrazit</span>
<span style="position:absolute;left:1581.60px;top:443.00px;font:700 17.5px/1 'Liberation Sans';color:#454545;white-space:pre;transform:scaleX(1.0237);transform-origin:0 0;">Možnosti</span>
<span style="position:absolute;left:1581.60px;top:615.00px;font:700 17.5px/1 'Liberation Sans';color:#454545;white-space:pre;transform:scaleX(1.0167);transform-origin:0 0;">Rozměry papíru</span>
<span style="position:absolute;left:1608.84px;top:239.00px;font:400 18px/1 'Liberation Sans';color:#666666;white-space:pre;transform:scaleX(0.9593);transform-origin:0 0;">Mřížka</span>
<span style="position:absolute;left:1609.80px;top:273.00px;font:400 18px/1 'Liberation Sans';color:#666666;white-space:pre;transform:scaleX(0.9669);transform-origin:0 0;">Zobrazení stránky</span>
<span style="position:absolute;left:1608.86px;top:308.00px;font:400 18px/1 'Liberation Sans';color:#666666;white-space:pre;transform:scaleX(0.9418);transform-origin:0 0;">Pozadí</span>
<span style="position:absolute;left:1608.83px;top:346.00px;font:400 18px/1 'Liberation Sans';color:#666666;white-space:pre;transform:scaleX(0.9676);transform-origin:0 0;">Barva pozadí</span>
<span style="position:absolute;left:1609.80px;top:381.00px;font:400 18px/1 'Liberation Sans';color:#666666;white-space:pre;transform:scaleX(0.8875);transform-origin:0 0;">Stín</span>
<span style="position:absolute;left:1766.30px;top:381.00px;font:400 18px/1 'Liberation Sans';color:#666666;white-space:pre;transform:scaleX(0.9200);transform-origin:0 0;">Výkres</span>
<span style="position:absolute;left:1610.00px;top:481.00px;font:400 18px/1 'Liberation Sans';color:#666666;white-space:pre;transform:scaleX(0.9890);transform-origin:0 0;">Šipky připojení</span>
<span style="position:absolute;left:1608.99px;top:517.00px;font:400 18px/1 'Liberation Sans';color:#666666;white-space:pre;transform:scaleX(1.0132);transform-origin:0 0;">Body připojení</span>
<span style="position:absolute;left:1610.00px;top:553.00px;font:400 18px/1 'Liberation Sans';color:#666666;white-space:pre;transform:scaleX(0.9747);transform-origin:0 0;">Vodicí linky</span>
<span style="position:absolute;left:1759.34px;top:240.00px;font:400 18px/1 'Liberation Sans';color:#222;white-space:pre;transform:scaleX(0.9650);transform-origin:0 0;">10 pt</span>
<span style="position:absolute;left:1778.40px;top:308.00px;font:400 18px/1 'Liberation Sans';color:#222;white-space:pre;transform:scaleX(0.9942);transform-origin:0 0;">Změnit...</span>
<span style="position:absolute;left:1590.60px;top:650.00px;font:400 18px/1 'Liberation Sans';color:#222;white-space:pre;transform:scaleX(1.0032);transform-origin:0 0;">A4 (210 mm x 297 mm)</span>
<span style="position:absolute;left:1622.63px;top:695.00px;font:400 18px/1 'Liberation Sans';color:#666666;white-space:pre;transform:scaleX(0.9699);transform-origin:0 0;">Na výšku</span>
<span style="position:absolute;left:1738.14px;top:695.00px;font:400 18px/1 'Liberation Sans';color:#666666;white-space:pre;transform:scaleX(0.9606);transform-origin:0 0;">Na šířku</span>
<span style="position:absolute;left:1682.70px;top:760.00px;font:400 18px/1 'Liberation Sans';color:#222;white-space:pre;transform:scaleX(1.0027);transform-origin:0 0;">Upravit data...</span>
<span style="position:absolute;left:1654.70px;top:792.00px;font:400 18px/1 'Liberation Sans';color:#222;white-space:pre;transform:scaleX(1.0066);transform-origin:0 0;">Vymazat výchozí styl</span>
</div></body></html>
